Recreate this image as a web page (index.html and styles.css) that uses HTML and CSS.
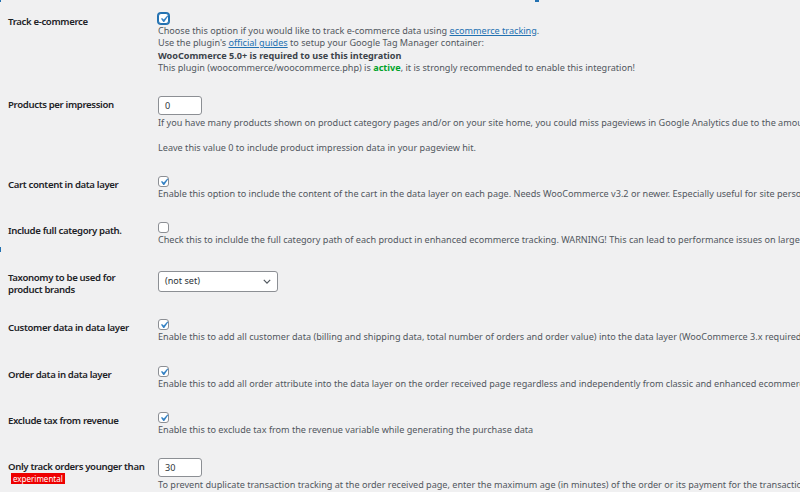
FILE: index.html
```html
<!DOCTYPE html>
<html>
<head>
<meta charset="utf-8">
<link rel="stylesheet" href="styles.css">
</head>
<body>
<div class="page">
  <span class="mark mark-a"></span>
  <span class="mark mark-b"></span>
  <span class="mark mark-c"></span>

  <div class="row">
    <div class="th">Track e-commerce</div>
    <div class="td">
      <span class="cb focus"><svg viewBox="0 0 20 20"><path d="M14.83 4.89l1.34.94-5.81 8.38H9.02L5.78 9.67l1.34-1.25 2.57 2.4z"/></svg></span>
      <p class="desc">Choose this option if you would like to track e-commerce data using <a href="#">ecommerce tracking</a>.<br>Use the plugin's <a href="#">official guides</a> to setup your Google Tag Manager container:<br><b class="strong">WooCommerce 5.0+ is required to use this integration</b><br>This plugin (woocommerce/woocommerce.php) is <b class="active">active</b>, it is strongly recommended to enable this integration!</p>
    </div>
  </div>

  <div class="row">
    <div class="th">Products per impression</div>
    <div class="td">
      <span class="num">0</span>
      <p class="desc">If you have many products shown on product category pages and/or on your site home, you could miss pageviews in Google Analytics due to the amount of data that is being sent.<br><br>Leave this value 0 to include product impression data in your pageview hit.</p>
    </div>
  </div>

  <div class="row">
    <div class="th">Cart content in data layer</div>
    <div class="td">
      <span class="cb"><svg viewBox="0 0 20 20"><path d="M14.83 4.89l1.34.94-5.81 8.38H9.02L5.78 9.67l1.34-1.25 2.57 2.4z"/></svg></span>
      <p class="desc">Enable this option to include the content of the cart in the data layer on each page. Needs WooCommerce v3.2 or newer. Especially useful for site personalization and remarketing.</p>
    </div>
  </div>

  <div class="row">
    <div class="th">Include full category path.</div>
    <div class="td">
      <span class="cb"></span>
      <p class="desc">Check this to inclulde the full category path of each product in enhanced ecommerce tracking. WARNING! This can lead to performance issues on large sites with lots of products and categories.</p>
    </div>
  </div>

  <div class="row">
    <div class="th">Taxonomy to be used for<br>product brands</div>
    <div class="td">
      <span class="select"><span>(not set)</span><svg viewBox="0 0 10 6"><path d="M1 1l4 4 4-4"/></svg></span>
    </div>
  </div>

  <div class="row">
    <div class="th">Customer data in data layer</div>
    <div class="td">
      <span class="cb"><svg viewBox="0 0 20 20"><path d="M14.83 4.89l1.34.94-5.81 8.38H9.02L5.78 9.67l1.34-1.25 2.57 2.4z"/></svg></span>
      <p class="desc">Enable this to add all customer data (billing and shipping data, total number of orders and order value) into the data layer (WooCommerce 3.x required)</p>
    </div>
  </div>

  <div class="row">
    <div class="th">Order data in data layer</div>
    <div class="td">
      <span class="cb"><svg viewBox="0 0 20 20"><path d="M14.83 4.89l1.34.94-5.81 8.38H9.02L5.78 9.67l1.34-1.25 2.57 2.4z"/></svg></span>
      <p class="desc">Enable this to add all order attribute into the data layer on the order received page regardless and independently from classic and enhanced ecommerce tracking (WooCommerce 3.x required)</p>
    </div>
  </div>

  <div class="row">
    <div class="th">Exclude tax from revenue</div>
    <div class="td">
      <span class="cb"><svg viewBox="0 0 20 20"><path d="M14.83 4.89l1.34.94-5.81 8.38H9.02L5.78 9.67l1.34-1.25 2.57 2.4z"/></svg></span>
      <p class="desc">Enable this to exclude tax from the revenue variable while generating the purchase data</p>
    </div>
  </div>

  <div class="row">
    <div class="th"><span class="nowrap">Only track orders younger than</span><br><span class="badge">experimental</span></div>
    <div class="td">
      <span class="num">30</span>
      <p class="desc">To prevent duplicate transaction tracking at the order received page, enter the maximum age (in minutes) of the order or its payment for the transaction to be tracked.</p>
    </div>
  </div>
</div>
</body>
</html>
```

FILE: styles.css
```css
html, body {
  margin: 0;
  height: 100%;
  overflow: hidden;
}
body {
  background: #f0f0f1;
  font-family: "Noto Sans", "Open Sans", sans-serif;
  font-size: 9.1px;
  color: #50575e;
}
.page {
  position: relative;
  padding: 2px 0 0 8px;
}
.mark {
  position: absolute;
  background: #2271b1;
}
.mark-a { left: 0; top: 0; width: 1px; height: 2px; }
.mark-b { left: 535px; top: 0; width: 4px; height: 2px; }
.mark-c { left: 0; top: 247px; width: 1px; height: 5px; }

.row {
  display: flex;
}
.th {
  width: 150px;
  flex: none;
  padding: 14px 0 12px;
  font-weight: 600;
  font-size: 9.6px;
  letter-spacing: -0.35px;
  color: #1d2327;
  line-height: 12.3px;
}
.nowrap {
  white-space: nowrap;
}
.td {
  padding: 11px 0;
  white-space: nowrap;
  line-height: 12.3px;
}
.desc {
  margin: 0;
}
.desc a {
  color: #2271b1;
  text-decoration: underline;
}
.strong {
  color: #3c434a;
}
.active {
  color: #00a32a;
}
.cb {
  display: block;
  position: relative;
  width: 11px;
  height: 11px;
  box-sizing: border-box;
  border: 1px solid #8c8f94;
  border-radius: 3px;
  background: #fff;
  margin-bottom: 1px;
}
.cb.focus {
  border-color: #2271b1;
  box-shadow: 0 0 0 1px #2271b1;
}
.cb svg {
  position: absolute;
  left: -2px;
  top: -2px;
  width: 14px;
  height: 14px;
  fill: #3582c4;
}
.num {
  display: block;
  width: 44px;
  height: 19px;
  box-sizing: border-box;
  border: 1px solid #8c8f94;
  border-radius: 3px;
  background: #fff;
  padding: 0 6px;
  line-height: 17px;
  color: #2c3338;
  margin-bottom: 2px;
}
.select {
  display: flex;
  align-items: center;
  justify-content: space-between;
  width: 120px;
  height: 21px;
  box-sizing: border-box;
  margin-top: 2px;
  padding: 0 6px 0 6px;
  border: 1px solid #8c8f94;
  border-radius: 3px;
  background: #fff;
  color: #2c3338;
}
.select svg {
  width: 8px;
  height: 5px;
  fill: none;
  stroke: #50575e;
  stroke-width: 1.5;
}
.badge {
  display: inline-block;
  margin-left: 3px;
  padding: 0 2px;
  background: #e00;
  color: #fff;
  font-weight: 400;
  font-size: 8px;
  letter-spacing: 0;
  line-height: 11px;
}
```
